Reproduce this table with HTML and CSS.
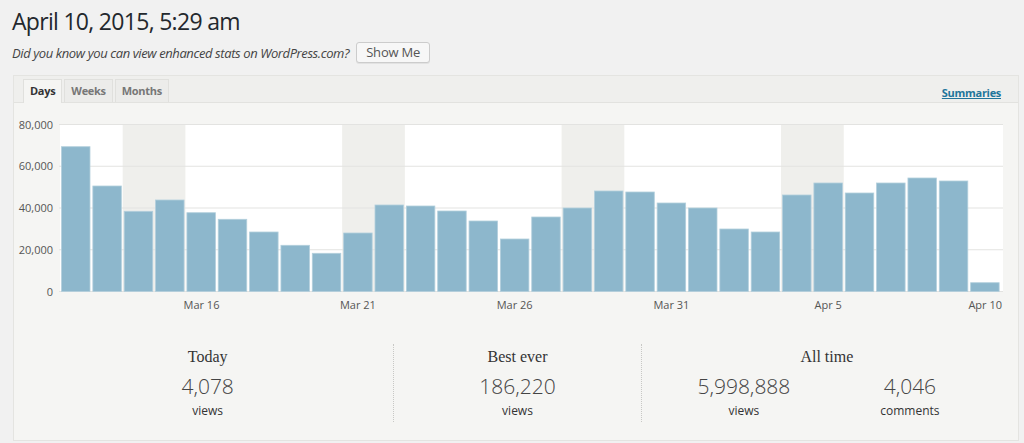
FILE: index.html
```html
<!DOCTYPE html>
<html>
<head>
<meta charset="utf-8">
<link rel="stylesheet" href="styles.css">
</head>
<body>
<div class="page">
  <h1 class="title">April 10, 2015, 5:29 am</h1>
  <div class="notice">
    <em class="notice-text">Did you know you can view enhanced stats on WordPress.com?</em>
    <button class="btn">Show Me</button>
  </div>
  <div class="panel">
    <div class="tabbar">
      <div class="tabs">
        <span class="tab active">Days</span>
        <span class="tab">Weeks</span>
        <span class="tab">Months</span>
      </div>
      <a class="summaries" href="#">Summaries</a>
    </div>
    <svg class="chart" width="1004" height="215" viewBox="14 103 1004 215">
      <rect x="60" y="124.5" width="943" height="167" fill="#ffffff"/>
      <g fill="#efefec">
        <rect x="122.7" y="125" width="62.7" height="166.5"/>
        <rect x="342.15" y="125" width="62.7" height="166.5"/>
        <rect x="561.6" y="125" width="62.7" height="166.5"/>
        <rect x="781.05" y="125" width="62.7" height="166.5"/>
      </g>
      <g stroke="#e3e3e1" stroke-width="1.2">
        <line x1="59" y1="124.5" x2="1003" y2="124.5"/>
        <line x1="59" y1="166.25" x2="1003" y2="166.25"/>
        <line x1="59" y1="208" x2="1003" y2="208"/>
        <line x1="59" y1="249.75" x2="1003" y2="249.75"/>
        <line x1="59" y1="291.5" x2="1003" y2="291.5"/>
      </g>
      <g class="ylab" text-anchor="end">
        <text x="53" y="128.5">80,000</text>
        <text x="53" y="170.2">60,000</text>
        <text x="53" y="212">40,000</text>
        <text x="53" y="253.7">20,000</text>
        <text x="53" y="295.5">0</text>
      </g>
      <g fill="#8db7cc" stroke="#b3cfdc" stroke-width="0.8">
        <rect x="61.5" y="146.7" width="28.5" height="144.8"/>
        <rect x="92.85" y="186" width="28.5" height="105.5"/>
        <rect x="124.2" y="211.3" width="28.5" height="80.2"/>
        <rect x="155.55" y="200" width="28.5" height="91.5"/>
        <rect x="186.9" y="212.7" width="28.5" height="78.8"/>
        <rect x="218.25" y="219.3" width="28.5" height="72.2"/>
        <rect x="249.6" y="232" width="28.5" height="59.5"/>
        <rect x="280.95" y="245.3" width="28.5" height="46.2"/>
        <rect x="312.3" y="253.3" width="28.5" height="38.2"/>
        <rect x="343.65" y="233" width="28.5" height="58.5"/>
        <rect x="375" y="205" width="28.5" height="86.5"/>
        <rect x="406.35" y="206" width="28.5" height="85.5"/>
        <rect x="437.7" y="211" width="28.5" height="80.5"/>
        <rect x="469.05" y="221" width="28.5" height="70.5"/>
        <rect x="500.4" y="239" width="28.5" height="52.5"/>
        <rect x="531.75" y="217" width="28.5" height="74.5"/>
        <rect x="563.1" y="208" width="28.5" height="83.5"/>
        <rect x="594.45" y="191" width="28.5" height="100.5"/>
        <rect x="625.8" y="192" width="28.5" height="99.5"/>
        <rect x="657.15" y="203" width="28.5" height="88.5"/>
        <rect x="688.5" y="208" width="28.5" height="83.5"/>
        <rect x="719.85" y="229" width="28.5" height="62.5"/>
        <rect x="751.2" y="232" width="28.5" height="59.5"/>
        <rect x="782.55" y="195" width="28.5" height="96.5"/>
        <rect x="813.9" y="183" width="28.5" height="108.5"/>
        <rect x="845.25" y="193" width="28.5" height="98.5"/>
        <rect x="876.6" y="183" width="28.5" height="108.5"/>
        <rect x="907.95" y="178" width="28.5" height="113.5"/>
        <rect x="939.3" y="181" width="28.5" height="110.5"/>
        <rect x="970.65" y="282.7" width="28.5" height="8.8"/>
      </g>
      <g class="xlab" text-anchor="middle">
        <text x="201.5" y="308.8">Mar 16</text>
        <text x="357.9" y="308.8">Mar 21</text>
        <text x="514.65" y="308.8">Mar 26</text>
        <text x="671.4" y="308.8">Mar 31</text>
        <text x="828.15" y="308.8">Apr 5</text>
        <text x="985.2" y="308.8">Apr 10</text>
      </g>
    </svg>
    <div class="stats">
      <div class="stat">
        <div class="stat-title">Today</div>
        <div class="stat-num">4,078</div>
        <div class="stat-label">views</div>
      </div>
      <div class="stat divided">
        <div class="stat-title">Best ever</div>
        <div class="stat-num">186,220</div>
        <div class="stat-label">views</div>
      </div>
      <div class="stat divided">
        <div class="stat-title">All time</div>
        <div class="stat-pair">
          <div class="stat-sub">
            <div class="stat-num">5,998,888</div>
            <div class="stat-label">views</div>
          </div>
          <div class="stat-sub">
            <div class="stat-num">4,046</div>
            <div class="stat-label">comments</div>
          </div>
        </div>
      </div>
    </div>
  </div>
</div>
</body>
</html>
```
FILE: styles.css
```css
html, body {
  margin: 0;
  padding: 0;
  background: #f1f1f1;
  font-family: "Open Sans", "Liberation Sans", sans-serif;
  color: #444;
}
.page {
  padding-left: 12px;
  width: 1007px;
}
.title {
  margin: 6px 0 0 0;
  font-size: 23px;
  letter-spacing: -0.7px;
  line-height: 30px;
  font-weight: 400;
  color: #23282d;
}
.notice {
  display: flex;
  align-items: center;
  margin-top: 6px;
  height: 21px;
}
.notice-text {
  font-size: 13px;
  letter-spacing: -0.4px;
  color: #444;
  font-style: italic;
}
.btn {
  margin-left: 7px;
  height: 21px;
  padding: 0 9px;
  font-family: "Open Sans", "Liberation Sans", sans-serif;
  font-size: 13px;
  letter-spacing: -0.2px;
  line-height: 19px;
  color: #555;
  background: #f7f7f7;
  border: 1px solid #cccccc;
  border-radius: 3px;
  box-shadow: 0 1px 0 #e2e2e2;
}
.panel {
  margin-top: 12px;
  margin-left: 1px;
  width: 1004px;
  background: #f5f5f3;
  border: 1px solid #e4e4e1;
}
.tabbar {
  display: flex;
  justify-content: space-between;
  align-items: flex-end;
  height: 26px;
  background: #efefed;
  border-bottom: 1px solid #e2e2df;
  padding: 0 17px 0 9px;
}
.tabs {
  display: flex;
  gap: 2px;
}
.tab {
  display: block;
  height: 22px;
  line-height: 22px;
  padding: 0 6px;
  font-size: 11px;
  letter-spacing: -0.3px;
  font-weight: 700;
  color: #777;
  background: #ececea;
  border: 1px solid #e0e0dd;
  border-bottom: none;
}
.tab.active {
  color: #333;
  background: #f5f5f3;
  height: 23px;
  margin-bottom: -1px;
}
.summaries {
  font-size: 11px;
  letter-spacing: -0.3px;
  font-weight: 700;
  color: #21759b;
  text-decoration: underline;
  line-height: 16px;
  margin-bottom: 1px;
}
.chart {
  display: block;
  font-family: "Open Sans", "Liberation Sans", sans-serif;
}
.ylab text, .xlab text {
  font-size: 11px;
  fill: #555;
}
.stats {
  display: grid;
  grid-template-columns: 3fr 2fr 3fr;
  width: 990px;
  margin: 26px 0 0 8px;
  padding-bottom: 18px;
}
.stat {
  height: 78px;
  text-align: center;
}
.divided {
  border-left: 1px dotted #c8c8c5;
}
.stat-title {
  font-family: "Liberation Serif", "DejaVu Serif", serif;
  font-size: 16px;
  line-height: 26px;
  color: #333;
}
.stat-num {
  font-size: 21px;
  font-weight: 300;
  line-height: 32px;
  color: #444;
}
.stat-label {
  font-size: 12px;
  line-height: 18px;
  color: #333;
}
.stat-pair {
  display: flex;
  justify-content: center;
}
.stat-sub {
  width: 166px;
}
```
